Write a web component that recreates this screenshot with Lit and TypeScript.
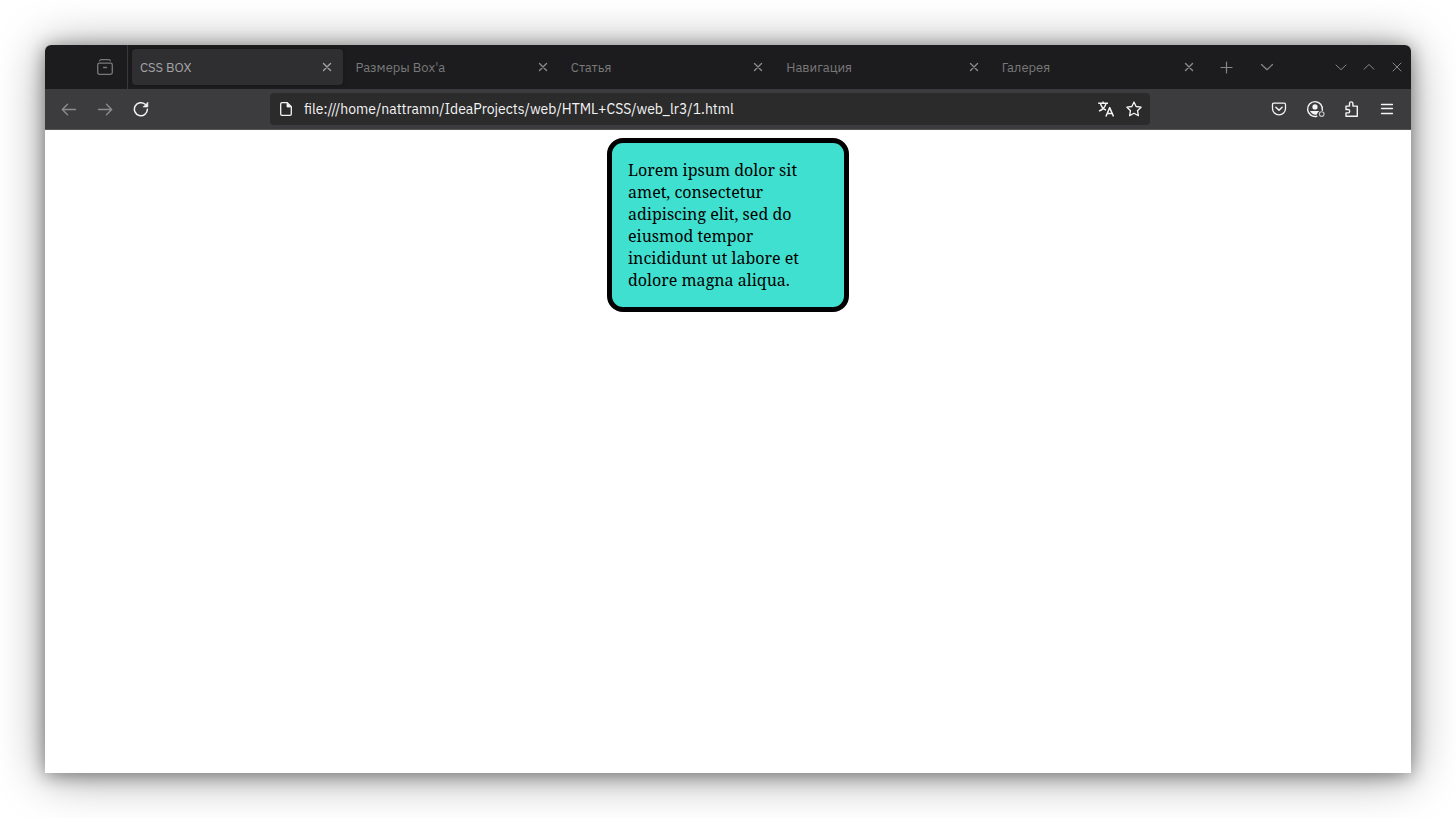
import { LitElement, html, svg, css, SVGTemplateResult } from "lit";
import { customElement, state } from "lit/decorators.js";
import { classMap } from "lit/directives/class-map.js";

const icon = (body: SVGTemplateResult, size = 16) => html`<svg
  width=${size}
  height=${size}
  viewBox="0 0 ${size} ${size}"
  fill="none"
  stroke="currentColor"
  stroke-linecap="round"
  stroke-linejoin="round"
  aria-hidden="true"
>${body}</svg>`;

const icons = {
  archive: icon(svg`<path d="M2.6 1.9Q3 .7 4.3 .7H11.7Q13 .7 13.4 1.9" stroke-width="1.3"/>
    <rect x=".7" y="4.2" width="14.6" height="11.1" rx="1.8" stroke-width="1.3"/><path d="M6.5 8.5H9.5" stroke-width="1.3"/>`),
  back: icon(svg`<path d="M14.5 8.5H1.5M6.5 3.3 1.3 8.5l5.2 5.2" stroke-width="1.4"/>`),
  forward: icon(svg`<path d="M1.5 8.5H14.5M9.5 3.3 14.7 8.5l-5.2 5.2" stroke-width="1.4"/>`),
  reload: icon(svg`<path d="M14.4 8.2A6.5 6.5 0 1 1 12.2 3.3" stroke-width="1.5"/>
    <path d="M14.9 1.4V5.6a.4.4 0 0 1-.4.4H10.3Z" fill="currentColor" stroke-width=".6"/>`),
  file: icon(svg`<path d="M4 1.7H9.2L13.3 5.8V13a1.3 1.3 0 0 1-1.3 1.3H4A1.3 1.3 0 0 1 2.7 13V3A1.3 1.3 0 0 1 4 1.7Z" stroke-width="1.3"/>
    <path d="M9 2V6H13Z" fill="currentColor" stroke-width=".8"/>`),
  translate: icon(svg`<path d="M.2 2.3H10M5.1.4V2.3M8 2.5C7.2 5.8 4.6 8.6 1 10.2M2.4 2.5C3.4 5.8 5.4 8.2 8 9.2" stroke-width="1.4" stroke-linecap="butt"/>
    <path d="M7.9 15.5 11.7 6.6 15.5 15.5M9.2 12.6H14.2" stroke-width="1.5" stroke-linecap="butt"/>`),
  star: icon(svg`<path d="M8 1 10.1 5.5 15.1 6.2 11.5 9.7 12.4 14.7 8 12.3 3.6 14.7 4.5 9.7.9 6.2 5.9 5.5Z" stroke-width="1.3"/>`),
  pocket: icon(svg`<path d="M2.7 2.2H13.3A1.2 1.2 0 0 1 14.5 3.4V7.4A6.5 6.5 0 0 1 1.5 7.4V3.4A1.2 1.2 0 0 1 2.7 2.2Z" stroke-width="1.3"/>
    <path d="M4.9 6.2 8 9.2 11.1 6.2" stroke-width="1.5"/>`),
  account: icon(svg`<path d="M10.8 16.2A7.4 7.4 0 1 1 16.3 10.2" stroke-width="1.4"/>
    <circle cx="9" cy="6.9" r="2.6" fill="currentColor" stroke="none"/>
    <path d="M4 11H13.4L11.8 12.4 10.8 14.6Q6 15 4 11Z" fill="currentColor" stroke="none"/>
    <circle cx="15.7" cy="14.1" r="2.3" stroke-width="1.1" opacity=".75"/>`, 19),
  extension: icon(svg`<path d="M3 5.1H6.5V2.6A1.7 1.7 0 0 1 9.9 2.6V5.1H14.3V15.3H3V11.9H5A1.6 1.6 0 0 0 5 8.5H3Z" stroke-width="1.4"/>`),
  menu: icon(svg`<path d="M2.5 3.5H13.5M2.5 7.5H13.5M2.5 12.5H13.5" stroke-width="1.3"/>`),
  tabClose: icon(svg`<path d="M4.5 4.5 11.5 11.5M11.5 4.5 4.5 11.5" stroke-width="1.4"/>`),
  plus: icon(svg`<path d="M7.5 3V14M2 8.5H13" stroke-width="1.2"/>`),
  list: icon(svg`<path d="M2.5 5.5 8 10.7 13.5 5.5" stroke-width="1.2"/>`),
  down: icon(svg`<path d="M3 6 8 10.7 13 6" stroke-width="1"/>`),
  up: icon(svg`<path d="M3 10.2 8 5.5 13 10.2" stroke-width="1"/>`),
  close: icon(svg`<path d="M4 4 12 12M12 4 4 12" stroke-width="1"/>`),
};

const buttonStyles = css`
  button {
    display: flex;
    align-items: center;
    justify-content: center;
    flex: none;
    margin: 0;
    padding: 0;
    border: 0;
    background: none;
    color: inherit;
    font: inherit;
  }
  svg {
    display: block;
    flex: none;
  }
`;

@customElement("tab-strip")
class TabStrip extends LitElement {
  static styles = [
    buttonStyles,
    css`
      :host {
        display: flex;
        align-items: stretch;
        height: 44px;
        background: #1c1c1e;
        color: #79797a;
        font-size: 13px;
      }
      .lead {
        display: flex;
        padding: 0 4px 0 42px;
        border-right: 1px solid #39393b;
      }
      .tool {
        width: 36px;
      }
      .tabs {
        display: flex;
        flex: 1;
        min-width: 0;
        gap: 4px;
        padding: 4px;
      }
      .tab {
        display: flex;
        flex: 1;
        min-width: 0;
        border-radius: 4px;
      }
      .tab.selected {
        background: #2f2f31;
        color: #a5a5a6;
        box-shadow: 0 0 3px #141416;
      }
      .tab .title {
        flex: 1;
        min-width: 0;
        justify-content: flex-start;
        padding-left: 8px;
        white-space: nowrap;
        overflow: hidden;
      }
      .tab .dismiss {
        width: 32px;
        color: #8b8b8c;
      }
      .selected .dismiss {
        color: #a5a5a6;
      }
      .actions {
        display: flex;
        gap: 4px;
        padding-right: 42px;
      }
      .actions,
      .controls {
        color: #868687;
      }
      .controls {
        display: flex;
      }
      .control {
        width: 28px;
      }
    `,
  ];

  @state() selected = 0;
  titles = ["CSS BOX", "Размеры Box'а", "Статья", "Навигация", "Галерея"];

  render() {
    return html`
      <div class="lead"><button class="tool" aria-label="Архив">${icons.archive}</button></div>
      <div class="tabs">
        ${this.titles.map(
          (title, i) => html`<div class=${classMap({ tab: true, selected: i === this.selected })}>
            <button class="title" @click=${() => (this.selected = i)}>${title}</button>
            <button class="dismiss" aria-label="Закрыть вкладку">${icons.tabClose}</button>
          </div>`
        )}
      </div>
      <div class="actions">
        <button class="tool" aria-label="Новая вкладка">${icons.plus}</button>
        <button class="tool" aria-label="Список вкладок">${icons.list}</button>
      </div>
      <div class="controls">
        <button class="control" aria-label="Свернуть">${icons.down}</button>
        <button class="control" aria-label="Развернуть">${icons.up}</button>
        <button class="control" aria-label="Закрыть">${icons.close}</button>
      </div>
    `;
  }
}

@customElement("nav-bar")
class NavBar extends LitElement {
  static styles = [
    buttonStyles,
    css`
      :host {
        display: flex;
        align-items: center;
        justify-content: space-between;
        height: 40px;
        padding: 0 6px;
        background: #3c3c3e;
        border-bottom: 1px solid #555557;
        color: #f4f4f5;
      }
      .group {
        display: flex;
        flex: none;
      }
      .tool {
        width: 36px;
        height: 36px;
      }
      .dim {
        color: #8b8b8c;
      }
      .address {
        display: flex;
        align-items: center;
        flex: 0 1 880px;
        min-width: 0;
        height: 32px;
        border-radius: 4px;
        background: #2b2b2b;
      }
      .origin {
        display: flex;
        padding: 0 10px 0 8px;
      }
      .url {
        flex: 1;
        min-width: 0;
        margin: 0;
        padding: 0;
        border: 0;
        outline: 0;
        background: none;
        color: #f4f4f5;
        font: inherit;
        font-size: 14px;
        line-height: 20px;
      }
      .inner {
        width: 28px;
        height: 28px;
      }
      .address .group {
        padding-right: 2px;
      }
    `,
  ];

  render() {
    return html`
      <div class="group">
        <button class="tool dim" aria-label="Назад">${icons.back}</button>
        <button class="tool dim" aria-label="Вперёд">${icons.forward}</button>
        <button class="tool" aria-label="Обновить">${icons.reload}</button>
      </div>
      <div class="address">
        <label class="origin" for="url" aria-label="Адрес">${icons.file}</label>
        <input
          class="url"
          id="url"
          type="text"
          spellcheck="false"
          value="file:///home/nattramn/IdeaProjects/web/HTML+CSS/web_lr3/1.html"
        />
        <div class="group">
          <button class="inner" aria-label="Перевести">${icons.translate}</button>
          <button class="inner" aria-label="Добавить в закладки">${icons.star}</button>
        </div>
      </div>
      <div class="group">
        <button class="tool" aria-label="Pocket">${icons.pocket}</button>
        <button class="tool" aria-label="Аккаунт">${icons.account}</button>
        <button class="tool" aria-label="Расширения">${icons.extension}</button>
        <button class="tool" aria-label="Меню">${icons.menu}</button>
      </div>
    `;
  }
}

@customElement("app-root")
class AppRoot extends LitElement {
  static styles = css`
    :host {
      display: flex;
      box-sizing: border-box;
      min-height: 100vh;
      padding: 45px;
      background: #fff;
      font-family: "IBM Plex Sans", Roboto, "Noto Sans", sans-serif;
    }
    .window {
      display: flex;
      flex-direction: column;
      flex: 1;
      min-width: 0;
      border-radius: 6px 6px 0 0;
      background: #fff;
      box-shadow:
        0 2px 18px rgba(0, 0, 0, 0.4),
        0 3px 48px rgba(0, 0, 0, 0.4);
    }
    .chrome {
      border-radius: 6px 6px 0 0;
      overflow: hidden;
    }
    .page {
      flex: 1;
      padding: 8px;
    }
    .box {
      width: 200px;
      margin: 0 auto;
      padding: 16px;
      border: 5px solid #000;
      border-radius: 16px;
      background: turquoise;
      color: #000;
      font-family: "Noto Serif", "DejaVu Serif", serif;
      font-size: 16px;
      line-height: 22px;
    }
  `;

  render() {
    return html`
      <div class="window">
        <div class="chrome">
          <tab-strip></tab-strip>
          <nav-bar></nav-bar>
        </div>
        <main class="page">
          <div class="box">
            Lorem ipsum dolor sit amet, consectetur adipiscing elit, sed do eiusmod tempor incididunt ut labore et
            dolore magna aliqua.
          </div>
        </main>
      </div>
    `;
  }
}
